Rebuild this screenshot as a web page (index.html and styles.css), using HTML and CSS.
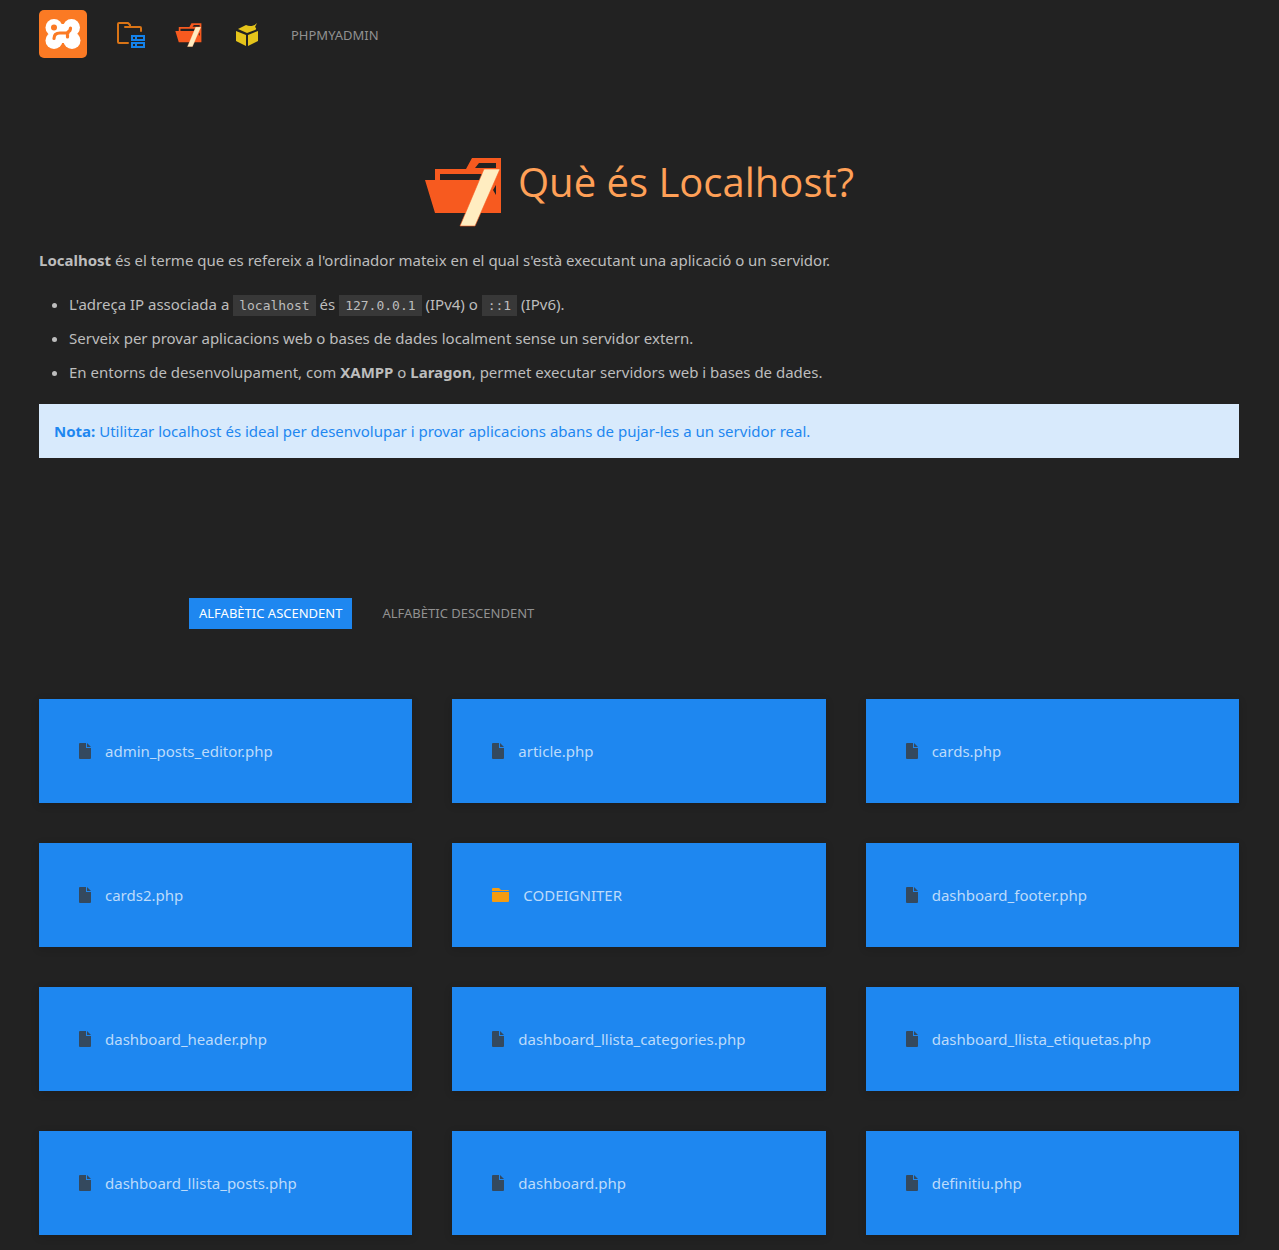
FILE: index.html
```html
<!DOCTYPE html>
<html lang="ca">
<head>
<meta charset="utf-8">
<meta name="viewport" content="width=device-width, initial-scale=1">
<title>Localhost</title>
<link rel="stylesheet" href="styles.css">
</head>
<body>
<svg class="sprite" aria-hidden="true">
  <symbol id="folder-seven" viewBox="0 0 78 70" preserveAspectRatio="xMinYMid meet">
    <path fill="#f75a1f" fill-rule="evenodd" d="M1 23H11V12H42L48 1H77V56H11ZM51 11L55 6H72V11ZM16 17V23H56L60 17Z"/>
    <path fill="#222" d="M72 28V38L69 33Z"/>
    <path fill="#ffedc1" stroke="#f75a1f" stroke-width=".6" d="M60 12H76L51 69H36Z"/>
  </symbol>
  <symbol id="file" viewBox="0 0 12 16">
    <path fill="#34495e" d="M1 0H7V5H12V15Q12 16 11 16H1Q0 16 0 15V1Q0 0 1 0ZM8 0L12 4H8Z"/>
  </symbol>
  <symbol id="folder" viewBox="0 0 17 14">
    <path fill="#f39c12" d="M0 3V1Q0 0 1 0H7L9 2H16Q17 2 17 3ZM0 4H17V13Q17 14 16 14H1Q0 14 0 13Z"/>
  </symbol>
</svg>

<header class="container">
  <nav class="navbar" aria-label="Principal">
    <a href="#" aria-label="XAMPP"><svg class="logo" viewBox="0 0 48 48">
      <rect width="48" height="48" rx="5" fill="#fb7a24"/>
      <g fill="#fff">
        <circle cx="15" cy="17.500" r="8.500"/>
        <circle cx="32.500" cy="17.500" r="8.500"/>
        <circle cx="15" cy="30.500" r="8.500"/>
        <circle cx="33" cy="30.500" r="8.500"/>
        <path d="M15 14H33V33H15Z"/>
      </g>
      <circle cx="15" cy="17.500" r="3" fill="#fb7a24"/>
      <path d="M15 28.500C15 24.500 17.500 23 21 23H29M28.500 23V27M29 22Q31.500 21 31.500 18" fill="none" stroke="#fb7a24" stroke-width="3.200" stroke-linecap="round"/>
    </svg></a>
    <a class="nav-item" href="#" aria-label="Fitxers"><svg class="nav-files" viewBox="0 0 28 26" fill="none" stroke-width="2">
      <path stroke="#d97416" stroke-linecap="round" stroke-linejoin="round" d="M11 21H2Q1 21 1 20V2Q1 1 2 1H11L13 3V5H8M13 5H23Q24 5 24 6V9"/>
      <path stroke="#1482ea" d="M15 14H27V18H15ZM15 21H27V25H15ZM19 14V18M19 21V25"/>
    </svg></a>
    <a class="nav-item" href="#" aria-label="Localhost"><svg class="nav-seven"><use href="#folder-seven"/></svg></a>
    <a class="nav-item" href="#" aria-label="Paquets"><svg class="nav-box" viewBox="0 0 26 24" fill="#e5c41b">
      <path d="M3 6L11 2C15 4 19 3 22 0L20 4C21 5 22 6 20 7L12 10Z"/>
      <path d="M1 8L11 12V23L1 18ZM23 8L13 12V23L23 18Z"/>
    </svg></a>
    <a class="nav-item nav-text" href="#">PHPMYADMIN</a>
  </nav>
</header>

<main class="container">
  <section class="intro">
    <h1><svg class="title-icon" aria-hidden="true"><use href="#folder-seven"/></svg><span>Què és Localhost?</span></h1>
    <p><strong>Localhost</strong> és el terme que es refereix a l'ordinador mateix en el qual s'està executant una aplicació o un servidor.</p>
    <ul>
      <li>L'adreça IP associada a <code>localhost</code> és <code>127.0.0.1</code> (IPv4) o <code>::1</code> (IPv6).</li>
      <li>Serveix per provar aplicacions web o bases de dades localment sense un servidor extern.</li>
      <li>En entorns de desenvolupament, com <strong>XAMPP</strong> o <strong>Laragon</strong>, permet executar servidors web i bases de dades.</li>
    </ul>
    <div class="note"><strong>Nota:</strong> Utilitzar localhost és ideal per desenvolupar i provar aplicacions abans de pujar-les a un servidor real.</div>
  </section>

  <div class="sorting">
    <button type="button" class="active">ALFABÈTIC ASCENDENT</button>
    <button type="button">ALFABÈTIC DESCENDENT</button>
  </div>

  <div class="cards">
    <a class="card" href="#"><svg class="file"><use href="#file"/></svg>admin_posts_editor.php</a>
    <a class="card" href="#"><svg class="file"><use href="#file"/></svg>article.php</a>
    <a class="card" href="#"><svg class="file"><use href="#file"/></svg>cards.php</a>
    <a class="card" href="#"><svg class="file"><use href="#file"/></svg>cards2.php</a>
    <a class="card" href="#"><svg class="folder"><use href="#folder"/></svg>CODEIGNITER</a>
    <a class="card" href="#"><svg class="file"><use href="#file"/></svg>dashboard_footer.php</a>
    <a class="card" href="#"><svg class="file"><use href="#file"/></svg>dashboard_header.php</a>
    <a class="card" href="#"><svg class="file"><use href="#file"/></svg>dashboard_llista_categories.php</a>
    <a class="card" href="#"><svg class="file"><use href="#file"/></svg>dashboard_llista_etiquetas.php</a>
    <a class="card" href="#"><svg class="file"><use href="#file"/></svg>dashboard_llista_posts.php</a>
    <a class="card" href="#"><svg class="file"><use href="#file"/></svg>dashboard.php</a>
    <a class="card" href="#"><svg class="file"><use href="#file"/></svg>definitiu.php</a>
  </div>
</main>
</body>
</html>
```
FILE: styles.css
```css
* { box-sizing: border-box; }

body {
  margin: 0;
  background: #222;
  color: #bdbdbd;
  font: 15px/24px "Segoe UI", "Noto Sans", "Open Sans", sans-serif;
}

svg { display: block; flex: none; }
a { color: inherit; text-decoration: none; }
strong { font-weight: 700; }

.sprite { position: absolute; width: 0; height: 0; }

.container {
  max-width: 1280px;
  margin: 0 auto;
  padding: 0 40px 0 39px;
}

.navbar {
  display: flex;
  align-items: center;
  gap: 30px;
  height: 68px;
}
.nav-item { padding-top: 2px; }
.logo { width: 48px; height: 48px; }
.nav-files { width: 28px; height: 26px; }
.nav-seven { width: 30px; height: 24px; }
.nav-box { width: 26px; height: 24px; }
.nav-text { color: #919191; font-size: 13px; }

.intro { padding-top: 88px; }

h1 {
  display: flex;
  justify-content: center;
  gap: 16px;
  margin: 0 0 20px;
  color: #ffa057;
  font: 400 40px/52px "Segoe UI", "Open Sans", sans-serif;
}
.title-icon { width: 78px; height: 72px; }

p { margin: 0 0 20px; }

ul { margin: 0 0 20px; padding-left: 30px; }
li + li { margin-top: 10px; }

code {
  padding: 3px 6px;
  background: #383838;
  font: 13px/18px Consolas, "DejaVu Sans Mono", monospace;
}

.note {
  padding: 15px;
  background: #d8eafc;
  color: #1e87f0;
}

.sorting {
  display: flex;
  gap: 20px;
  margin: 140px 0 70px;
  padding-left: 150px;
}
.sorting button {
  padding: 5px 10px;
  border: 0;
  background: none;
  color: #919191;
  font: 13px/21px "Segoe UI", "Noto Sans", "Open Sans", sans-serif;
}
.sorting .active { background: #1e87f0; color: #fff; }

.cards {
  display: grid;
  grid-template-columns: repeat(3, 1fr);
  gap: 40px;
  padding-bottom: 40px;
}
.card {
  display: flex;
  align-items: center;
  gap: 14px;
  padding: 40px;
  background: #1e87f0;
  box-shadow: 0 2px 8px rgba(0, 0, 0, .16);
  color: #bcdbfb;
}
.file { width: 12px; height: 16px; }
.folder { width: 17px; height: 14px; }
```
